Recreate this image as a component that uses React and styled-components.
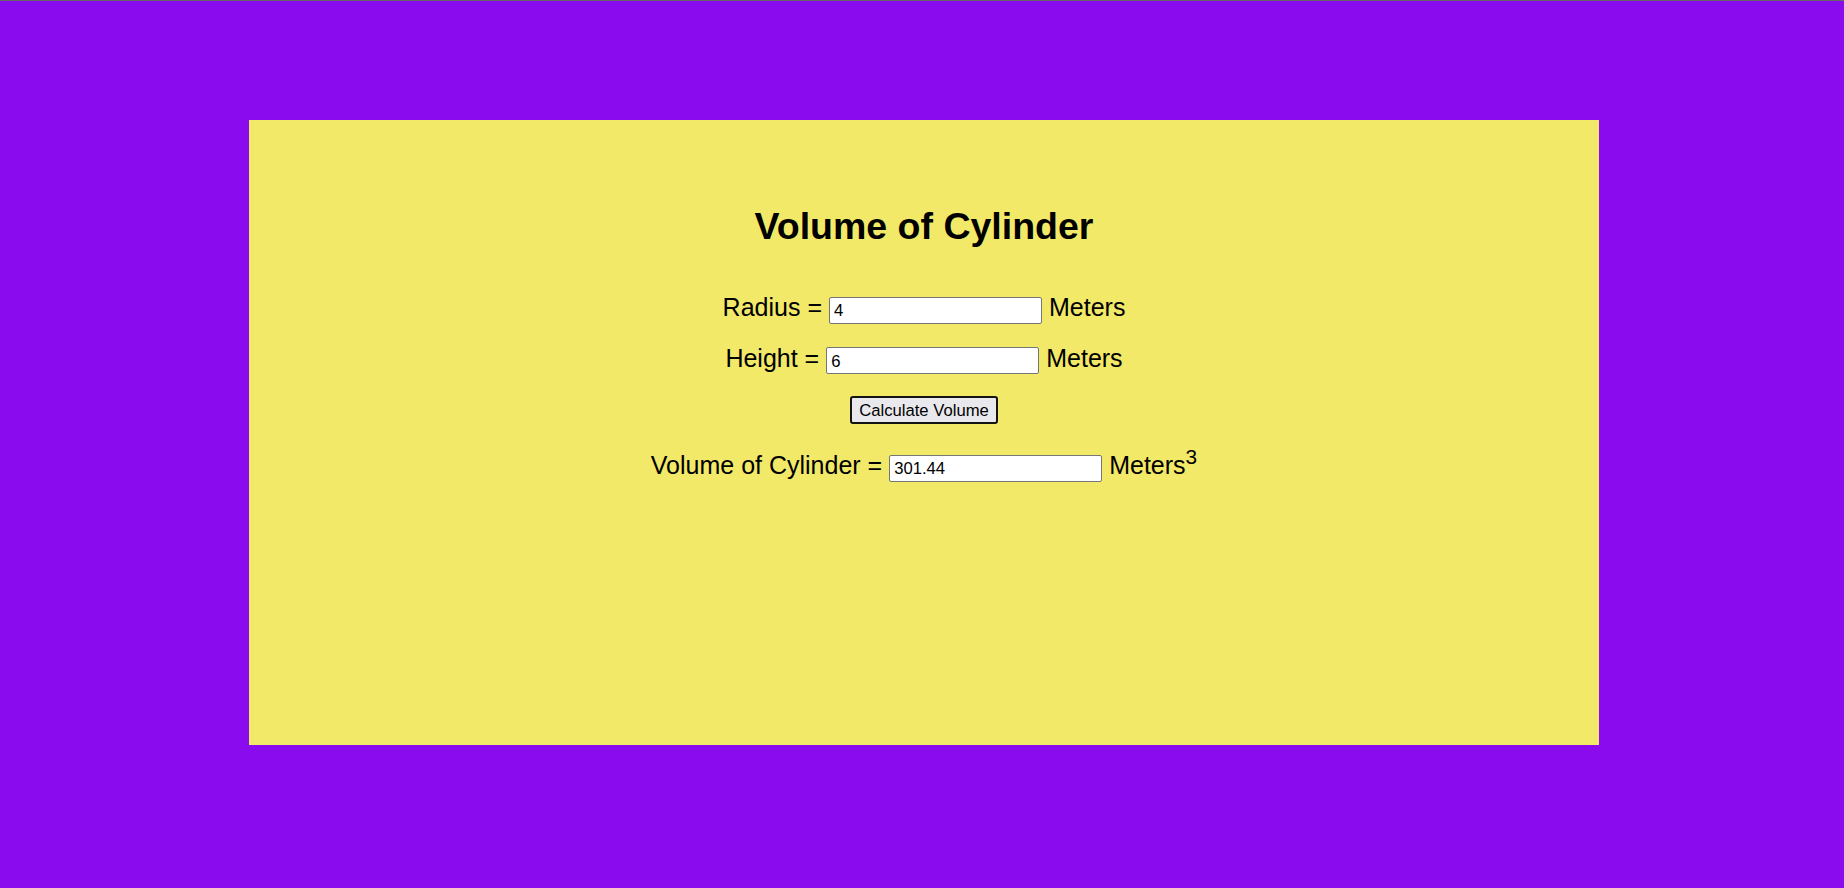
import React, { useState } from 'react';
import styled, { createGlobalStyle } from 'styled-components';

const GlobalStyle = createGlobalStyle`
  html, body {
    margin: 0;
    padding: 0;
    background-color: #8a0cee;
  }
  body {
    min-height: 888px;
    border-top: 1px solid #666;
    box-sizing: border-box;
    font-family: "Liberation Sans", Arial, sans-serif;
  }
`;

const Page = styled.div`
  padding-top: 119px;
  padding-left: 249px;
`;

const Card = styled.section`
  width: 1350px;
  height: 625px;
  box-sizing: border-box;
  padding-top: 85px;
  background-color: #f2e968;
  color: #000;
  text-align: center;
`;

const Title = styled.h1`
  margin: 0 0 45px;
  font-size: 37.5px;
  line-height: 43px;
  font-weight: bold;
`;

const Row = styled.div`
  display: flex;
  justify-content: center;
  align-items: baseline;
  gap: 7px;
  font-size: 25px;
  line-height: 29px;
  margin-top: ${(p) => p.$gap || 0}px;
`;

const Field = styled.input`
  width: 213px;
  height: 27px;
  box-sizing: border-box;
  padding: 4px 4px 2px;
  border: 1px solid #767676;
  border-radius: 2px;
  background: #fff;
  color: #000;
  font-family: "Liberation Sans", Arial, sans-serif;
  font-size: 16.67px;
  line-height: 19px;
  outline: none;
`;

const ButtonRow = styled.div`
  display: flex;
  justify-content: center;
  margin-top: ${(p) => p.$gap}px;
`;

const Button = styled.button`
  height: 28px;
  box-sizing: border-box;
  padding: 0 7px;
  border: 2px solid #141414;
  border-radius: 3px;
  background: #e9e9ed;
  color: #000;
  font-family: "Liberation Sans", Arial, sans-serif;
  font-size: 16.67px;
  line-height: 19px;
  cursor: pointer;
`;

const Sup = styled.sup`
  font-size: 20.8px;
  line-height: 0;
  position: relative;
  top: -1px;
`;

export default function App() {
  const [radius, setRadius] = useState('4');
  const [height, setHeight] = useState('6');
  const [volume, setVolume] = useState('301.44');

  const calculate = () => {
    const r = parseFloat(radius);
    const h = parseFloat(height);
    if (!isNaN(r) && !isNaN(h)) {
      setVolume(String(Math.round(3.14 * r * r * h * 100) / 100));
    }
  };

  return (
    <>
      <GlobalStyle />
      <Page>
        <Card>
          <Title>Volume of Cylinder</Title>
          <Row>
            <span>Radius =</span>
            <Field value={radius} onChange={(e) => setRadius(e.target.value)} />
            <span>Meters</span>
          </Row>
          <Row $gap={20}>
            <span>Height =</span>
            <Field value={height} onChange={(e) => setHeight(e.target.value)} />
            <span>Meters</span>
          </Row>
          <ButtonRow $gap={22}>
            <Button onClick={calculate}>Calculate Volume</Button>
          </ButtonRow>
          <Row $gap={27}>
            <span>Volume of Cylinder =</span>
            <Field value={volume} readOnly />
            <span>
              Meters<Sup>3</Sup>
            </span>
          </Row>
        </Card>
      </Page>
    </>
  );
}
